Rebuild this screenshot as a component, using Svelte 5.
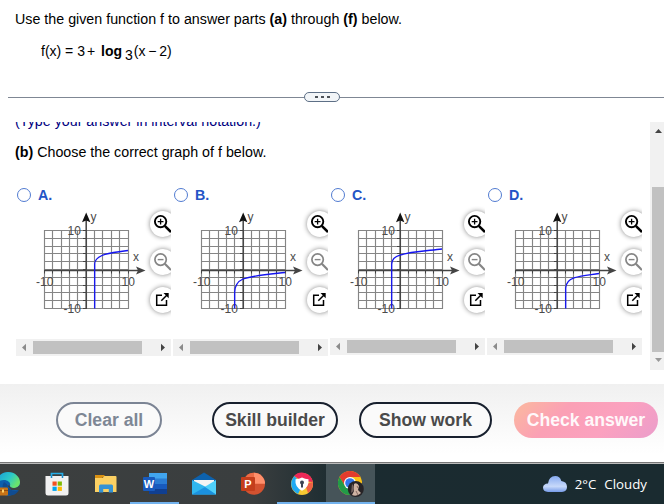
<script>
  const choices = [
    { letter: 'A', curve: 'M78.7 98.5V54C78.7 50 82 47.3 86 45.5C93 42.3 102 42.2 112 40.5' },
    { letter: 'B', curve: 'M61.7 98.5V82C62 75 65.5 71 70 69C82 65 98 64 112 62.5' },
    { letter: 'C', curve: 'M61.7 98.5V54C62 49 65 46.5 70 45.2C80 41.5 97 40.8 112 39' },
    { letter: 'D', curve: 'M78.7 98.5V78C79 73 82 69.5 87 67.8C95 65.3 102 65 112 63.5' }
  ];

  const steps = [0, 1, 2, 3, 4, 5, 6, 7, 8, 9, 10];
  const gridX = steps.map((n) => 28.5 + Math.round(n * 8.35));
  const gridY = steps.map((n) => 20.5 + Math.round(n * 7.8));
</script>

<div class="page">
  <header class="question">
    <p>Use the given function f to answer parts <b>(a)</b> through <b>(f)</b> below.</p>
    <p class="formula">f(x) = 3<span class="plus">+</span> <b>log</b> <span class="base">3</span>(x&thinsp;&minus;&thinsp;2)</p>
  </header>

  <div class="divider">
    <span class="line left"></span>
    <span class="handle"><i></i><i></i><i></i></span>
    <span class="line"></span>
  </div>

  <main class="answer">
    <div class="content">
      <p class="hint">(Type your answer in interval notation.)</p>
      <p class="prompt"><b>(b)</b> Choose the correct graph of f below.</p>

      <div class="choices">
        {#each choices as choice}
          <section class="choice">
            <div class="label">
              <span class="radio"></span>
              <b>{choice.letter}.</b>
            </div>

            <div class="figure">
              <svg class="graph" width="132" height="108" viewBox="0 0 132 108">
                <g stroke="#858585" stroke-width="1.15">
                  {#each gridX as x}
                    <path d="M{x} 20V99" />
                  {/each}
                  {#each gridY as y}
                    <path d="M28 {y}H113" />
                  {/each}
                </g>
                <path d="M70.2 10V99M28 60.5H122" stroke="#444" stroke-width="1.5" />
                {#each gridX as x}
                  <path d="M{x} 60V63.5" stroke="#444" />
                {/each}
                {#each gridY as y}
                  <path d="M67 {y}H70" stroke="#444" />
                {/each}
                <path d="M70.2 2.5L74.4 12.3L70.2 10.4L66 12.3Z" fill="#111" />
                <path d="M129.5 60.5L120 64.5L122 60.5L120 56.5Z" fill="#444" />
                <g class="ticks">
                  <text x="74.5" y="11">y</text>
                  <text x="117" y="50.5">x</text>
                  <text x="51.5" y="24.5">10</text>
                  <text x="20" y="76">-10</text>
                  <text x="105.5" y="76">10</text>
                  <text x="47.5" y="103">-10</text>
                </g>
                <path d={choice.curve} fill="none" stroke="#1414f0" stroke-width="1.3" />
              </svg>

              <div class="tools">
                <span class="tool">
                  <svg width="20" height="20" viewBox="0 0 20 20" fill="none" stroke="#000">
                    <circle cx="7.6" cy="7.6" r="5.7" stroke-width="1.9" />
                    <path d="M11.8 11.8L18 18" stroke-width="2.5" />
                    <path d="M4.7 7.6H10.5M7.6 4.7V10.5" stroke-width="1.3" />
                  </svg>
                </span>
                <span class="tool">
                  <svg width="20" height="20" viewBox="0 0 20 20" fill="none" stroke="#858585">
                    <circle cx="7.6" cy="7.6" r="5.7" stroke-width="1.7" />
                    <path d="M11.8 11.8L18 18" stroke-width="2.2" />
                    <path d="M4.7 7.6H10.5" stroke-width="1.4" />
                  </svg>
                </span>
                <span class="tool">
                  <svg width="20" height="20" viewBox="0 0 20 20" fill="none" stroke="#000">
                    <path d="M9 5.3H3.7V15.3H13.5V10" stroke-width="1.5" />
                    <path d="M8.3 10.7L14 5" stroke-width="1.5" />
                    <path d="M10.5 3H15.7V8.2Z" fill="#000" stroke="none" />
                  </svg>
                </span>
              </div>
            </div>

            <div class="hscroll">
              <svg width="17" height="17" viewBox="0 0 17 17"><path d="M6 8.5L10 4.8V12.2Z" fill="#8b8b8b" /></svg>
              <span class="thumb"></span>
              <svg width="17" height="17" viewBox="0 0 17 17"><path d="M11 8.5L7 4.8V12.2Z" fill="#444" /></svg>
            </div>
          </section>
        {/each}
      </div>
    </div>

    <div class="vscroll">
      <svg width="14" height="17" viewBox="0 0 14 17"><path d="M5 11H12L8.5 7Z" fill="#444" /></svg>
      <span class="thumb"></span>
      <svg width="14" height="17" viewBox="0 0 14 17"><path d="M5 6H12L8.5 10Z" fill="#999" /></svg>
    </div>
  </main>

  <footer class="actions">
    <button class="clear">Clear all</button>
    <button class="skill">Skill builder</button>
    <button class="show">Show work</button>
    <button class="check">Check answer</button>
  </footer>

  <nav class="taskbar">
    <div class="app edge">
      <svg width="24" height="24" viewBox="0 0 24 24">
        <defs>
          <linearGradient id="edgeTop" x1="0" y1="0" x2="1" y2=".5">
            <stop offset="0" stop-color="#189ad8" />
            <stop offset=".6" stop-color="#2cc8c8" />
            <stop offset="1" stop-color="#6be36b" />
          </linearGradient>
        </defs>
        <circle cx="12" cy="12" r="11.7" fill="#0d5fae" />
        <path d="M0 10C2 3 7 0 12 0C19 0 24 5 24 10C24 14 21 16 18 16C15 16 13.6 15 14 13.5C15 11 12 8 8 8C4 8 1 10 0 13Z" fill="url(#edgeTop)" />
        <path d="M14 13.5C13.6 15 15 16 18 16C20 16 22.5 15 23.5 13L24 18H15L11 13.5Z" fill="#3a4345" />
        <path d="M8 10C4 16 9 23.7 16 23.3C20 22.5 22 20 23 18C17 20 11 17 11 12.5Z" fill="#104c91" />
        <rect y="15.5" width="12" height="8" rx="1" fill="#c77316" />
        <path d="M0 18.5H12" stroke="#8e4b0d" />
        <rect x="6" y="17.5" width="2" height="3" fill="#ffd36b" />
      </svg>
    </div>
    <div class="app">
      <svg width="24" height="24" viewBox="0 0 24 24">
        <path d="M6.5 6V1.5H17.5V6" fill="none" stroke="#25aee8" stroke-width="1.7" />
        <path d="M.5 4H23.5V21Q23.5 23.5 21 23.5H3Q.5 23.5 .5 21Z" fill="#f1f1f1" />
        <path d="M6.5 6V3.8M17.5 6V3.8" stroke="#1689c9" stroke-width="1.5" />
        <path d="M7.5 9.5H11.7V13.7H7.5Z" fill="#f25022" />
        <path d="M12.7 9.5H16.9V13.7H12.7Z" fill="#7fba00" />
        <path d="M7.5 14.7H11.7V18.9H7.5Z" fill="#00a4ef" />
        <path d="M12.7 14.7H16.9V18.9H12.7Z" fill="#ffb900" />
      </svg>
    </div>
    <div class="app">
      <svg width="24" height="24" viewBox="0 0 24 24">
        <path d="M1 3H10L12 5H9L8 6H1Z" fill="#d99012" />
        <path d="M1 6H8.5L10.5 4H21.5Q22.5 4 22.5 5V20H1Z" fill="#fbd063" />
        <path d="M5 20.5V14Q5 12.5 6.5 12.5H17.5Q19 12.5 19 14V20.5H14.8V17H9.2V20.5Z" fill="#3592d4" />
      </svg>
    </div>
    <div class="app word">
      <svg width="24" height="24" viewBox="0 0 24 24">
        <path d="M6 1H24V7H6Z" fill="#41a5ee" />
        <path d="M6 6.5H24V12H6Z" fill="#2b7cd3" />
        <path d="M6 12H24V17H6Z" fill="#185abd" />
        <path d="M6 17H24V22H6Z" fill="#103f91" />
        <rect y="5" width="12" height="14" rx="1" fill="#185abd" />
        <text x="6" y="15.5" text-anchor="middle">W</text>
      </svg>
    </div>
    <div class="app">
      <svg width="24" height="24" viewBox="0 0 24 24">
        <path d="M0 8L12 .5L24 8V12H0Z" fill="#0d62ae" />
        <path d="M2 8H22V16H2Z" fill="#f4f4f4" />
        <path d="M0 8L24 20V22.5H0Z" fill="#30b6ee" />
        <path d="M24 8L12.5 15L24 22.5Z" fill="#50d0fa" />
        <path d="M0 22.5L13 15L24 22.5Z" fill="#1b91df" />
      </svg>
    </div>
    <div class="app">
      <svg width="24" height="24" viewBox="0 0 24 24">
        <circle cx="13" cy="11.7" r="11" fill="#d35230" />
        <path d="M13 .7A11 11 0 0 1 24 11.7H13Z" fill="#ff8f6b" />
        <path d="M13 .7A11 11 0 0 0 2 11.7H13Z" fill="#ed6c47" />
        <rect y="5" width="14" height="14" rx="1" fill="#c43e1c" />
        <text x="7" y="15.7" text-anchor="middle">P</text>
      </svg>
    </div>
    <div class="app open">
      <svg width="24" height="24" viewBox="0 0 24 24">
        <circle cx="12" cy="12" r="11" fill="#f7c832" />
        <path d="M4 4A11 11 0 0 1 22.8 10L12 9Z" fill="#ee2857" />
        <path d="M4.5 4A11 11 0 0 0 8 22L12 14L7 7Z" fill="#20aaf2" />
        <path d="M22.8 10A11 11 0 0 1 18 21L15 12Z" fill="#ef5f45" />
        <path d="M12 5.5Q15 7 18.5 7.2Q19.5 15 12 18.8Q4.5 15 5.5 7.2Q9 7 12 5.5Z" fill="#fff" />
        <circle cx="12" cy="10.5" r="2" fill="#3b4454" />
        <path d="M11 11H13V15.5H11Z" fill="#3b4454" />
      </svg>
    </div>
    <div class="app open active">
      <svg width="26" height="26" viewBox="0 0 26 26">
        <circle cx="12" cy="12" r="12" fill="#fbc116" />
        <path d="M1.6 6A12 12 0 0 1 22.4 6H12L7 15Z" fill="#e33b2e" />
        <path d="M1.6 6A12 12 0 0 0 12 24L17 15H7Z" fill="#229b48" />
        <circle cx="12" cy="12" r="6" fill="#fff" />
        <circle cx="12" cy="12" r="4.8" fill="#3278ea" />
        <circle cx="17.8" cy="18" r="8" fill="#272326" />
        <path d="M16 13Q19 11 21 15L20 19L23 22Q19 26 14 24L16 20Z" fill="#ceb3a3" />
        <path d="M14 13Q17 15 15.5 20L13 22Z" fill="#74625e" />
        <path d="M18 20L20 24M19 15L20 17" stroke="#755650" stroke-width=".8" />
      </svg>
    </div>
    <div class="weather">
      <svg width="26" height="18" viewBox="0 0 26 18">
        <defs>
          <linearGradient id="cloud" x1="0" y1="0" x2="0" y2="1">
            <stop offset="0" stop-color="#87aaf0" />
            <stop offset=".65" stop-color="#c7d9fa" />
            <stop offset="1" stop-color="#769be8" />
          </linearGradient>
        </defs>
        <path d="M6 17Q1 16.5 1 12.5Q1.3 8.8 6 8.5Q7 1 13.2 1Q18 1 19.3 6Q25 6.7 25 12Q25 16.5 20 17Z" fill="url(#cloud)" />
      </svg>
      <span>2°C</span>
      <span>Cloudy</span>
    </div>
  </nav>
</div>

<style>
  :global(body) {
    margin: 0;
    background: #fff;
  }

  .page {
    width: 664px;
    height: 504px;
    display: flex;
    flex-direction: column;
    overflow: hidden;
    font-family: 'Liberation Sans', Arial, sans-serif;
    font-size: 14.27px;
    color: #000;
  }

  p {
    margin: 0;
    line-height: 18px;
    white-space: nowrap;
  }

  .question {
    height: 81px;
    padding: 10px 15px 0;
  }

  .question .formula {
    margin: 14px 0 0 26px;
    font-size: 14px;
  }

  .plus {
    margin-left: 2px;
  }

  .formula b {
    margin: 0 0 0 2px;
  }

  .base {
    position: relative;
    top: 4px;
    margin-left: -1px;
    margin-right: 1px;
  }

  .divider {
    height: 12px;
    display: flex;
    align-items: center;
  }

  .line {
    flex: 1;
    height: 1px;
    background: #7f8794;
  }

  .line.left {
    flex: none;
    width: 296px;
    margin-left: 8px;
  }

  .handle {
    width: 34px;
    height: 8px;
    border: 1px solid #5d6f86;
    border-radius: 6px;
    background: #f2f5f8;
    display: flex;
    align-items: center;
    justify-content: center;
    gap: 3px;
  }

  .handle i {
    width: 3px;
    height: 2px;
    background: #4c5158;
  }

  .answer {
    height: 248px;
    margin-top: 19px;
    flex: none;
    display: flex;
  }

  .content {
    width: 650px;
    overflow: hidden;
  }

  .hint {
    margin: -10px 0 0 15px;
    color: #000080;
  }

  .prompt {
    margin: 13px 0 0 15px;
  }

  .choices {
    display: flex;
    gap: 2px;
    padding: 24px 0 0 16px;
  }

  .choice {
    width: 155px;
    flex: none;
    overflow: hidden;
  }

  .label {
    height: 20px;
    display: flex;
    align-items: center;
    gap: 7px;
    padding-left: 1px;
    color: #2454c6;
  }

  .radio {
    width: 12px;
    height: 12px;
    border: 1px solid #517bd1;
    border-radius: 50%;
  }

  .figure {
    height: 134px;
    display: flex;
    padding-top: 4px;
    box-sizing: border-box;
  }

  .choice:nth-child(n + 3) .figure {
    height: 133px;
  }

  .graph {
    flex: none;
    margin-top: 1px;
  }

  .ticks {
    font-size: 12px;
    fill: #4b4b4b;
  }

  .tools {
    display: flex;
    flex-direction: column;
    gap: 12px;
    margin: 2px 0 0 2px;
  }

  .tool {
    width: 26px;
    height: 26px;
    flex: none;
    border-radius: 50%;
    box-shadow: 0 0 5px #888;
    background: #fff;
    display: flex;
    align-items: center;
  }

  .tool svg {
    margin-left: 3px;
  }

  .hscroll {
    height: 17px;
    display: flex;
    background: #f1f1f1;
  }

  .hscroll .thumb {
    width: 109px;
    height: 13px;
    margin: 2px 12px 0 0;
    background: #c1c1c1;
  }

  .vscroll {
    width: 14px;
    display: flex;
    flex-direction: column;
    background: #f1f1f1;
  }

  .vscroll .thumb {
    height: 165px;
    margin: 48px 0 0 2px;
    background: #c1c1c1;
  }

  .actions {
    height: 78px;
    margin-top: 14px;
    padding: 18px 6px 0 56px;
    box-sizing: border-box;
    display: flex;
    background: linear-gradient(#f0f0f0, #fff 90%);
  }

  button {
    height: 36px;
    padding: 0;
    border: 2px solid #18202e;
    border-radius: 18px;
    background: #fafafa;
    color: #4a4a4a;
    font: bold 17.6px 'Liberation Sans', Arial, sans-serif;
    white-space: nowrap;
  }

  .clear {
    width: 106px;
    border-color: #7b8494;
    color: #7e8795;
  }

  .skill {
    width: 126px;
    margin-left: 50px;
  }

  .show {
    width: 133px;
    margin-left: 21px;
  }

  .check {
    width: 144px;
    margin-left: 22px;
    border: 0;
    background: linear-gradient(135deg, #fbb3a3 8%, #fba0b5 32%, #fba1bf 65%, #eb9dcb);
    color: #fff8fa;
  }

  .taskbar {
    height: 42px;
    flex: none;
    box-sizing: border-box;
    border-top: 1px solid #777;
    box-shadow: inset 0 1px #bbb;
    padding-top: 1px;
    display: flex;
    background: linear-gradient(90deg, #3c3f3f 0, #3a3e3f 38%, #1b2b30 51%, #1a2b30);
  }

  .app {
    width: 49px;
    flex: none;
    box-sizing: border-box;
    display: flex;
    align-items: center;
    justify-content: center;
  }

  .app text {
    font-size: 11px;
    font-weight: bold;
    fill: #fff;
  }

  .edge {
    width: 32px;
    justify-content: flex-start;
  }

  .edge svg {
    margin-left: -4px;
  }

  .word,
  .open {
    border-bottom: 2px solid #72b2ed;
    padding-top: 2px;
  }

  .active {
    background: #465459;
  }

  .weather {
    margin-left: auto;
    padding-right: 17px;
    display: flex;
    align-items: center;
    gap: 8px;
    color: #fff;
    font: 13.3px 'Open Sans', sans-serif;
  }

  .weather svg {
    margin-right: -1px;
  }
</style>
